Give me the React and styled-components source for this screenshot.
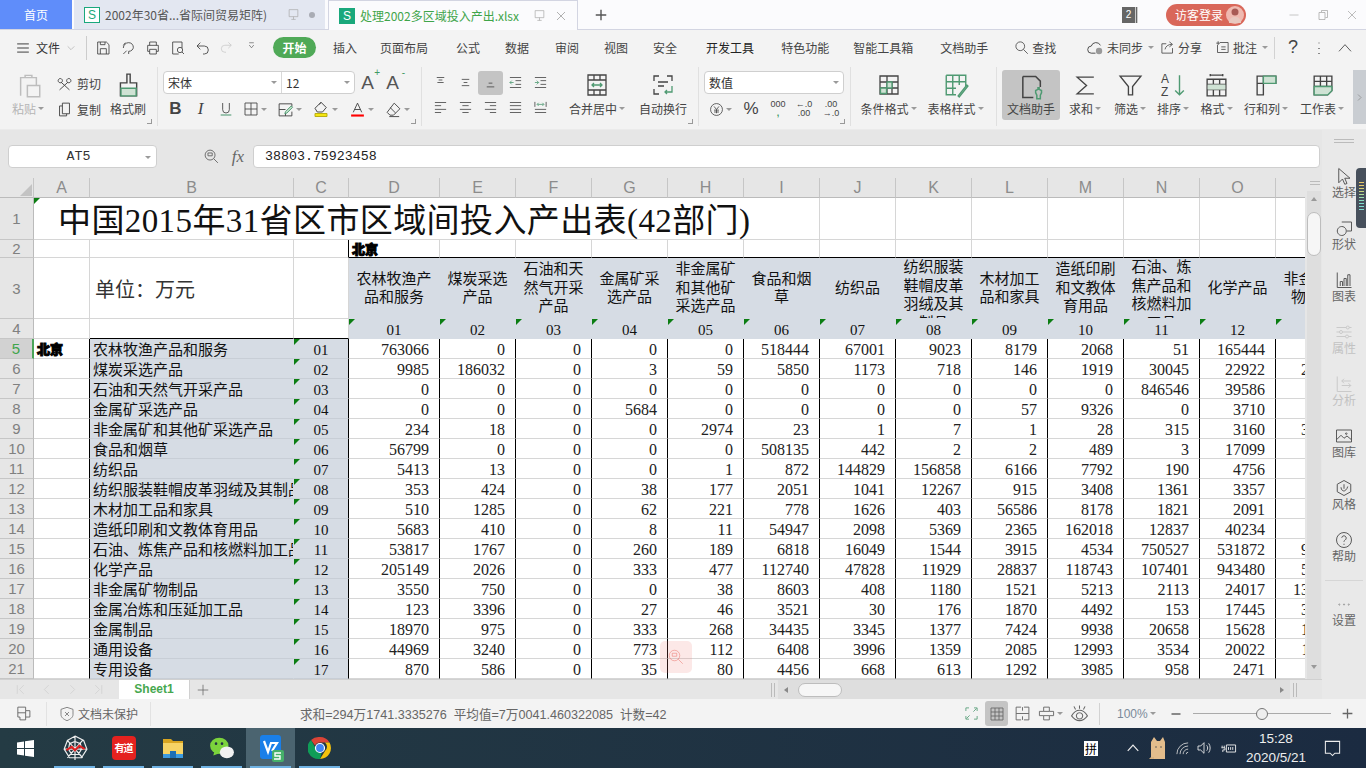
import React from "react";
import styled, { createGlobalStyle } from "styled-components";

const UI = `"Noto Sans CJK SC", "Liberation Sans", sans-serif`;
const SHEET = `"Liberation Serif", "Noto Sans CJK SC", serif`;

const Global = createGlobalStyle`
  html, body { margin: 0; padding: 0; background: #f3f3f3; }
  * { box-sizing: border-box; }
`;

const names = [
  "农林牧渔产品和服务", "煤炭采选产品", "石油和天然气开采产品", "金属矿采选产品", "非金属矿和其他矿采选产品",
  "食品和烟草", "纺织品", "纺织服装鞋帽皮革羽绒及其制品", "木材加工品和家具", "造纸印刷和文教体育用品",
  "石油、炼焦产品和核燃料加工品", "化学产品", "非金属矿物制品", "金属冶炼和压延加工品", "金属制品", "通用设备", "专用设备",
];
const headers = names.slice(0, 13);
const columns = ["D", "E", "F", "G", "H", "I", "J", "K", "L", "M", "N", "O", "P"];
const rows = [
  [763066, 0, 0, 0, 0, 518444, 67001, 9023, 8179, 2068, 51, 165444, 1204],
  [9985, 186032, 0, 3, 59, 5850, 1173, 718, 146, 1919, 30045, 22922, 22810],
  [0, 0, 0, 0, 0, 0, 0, 0, 0, 0, 846546, 39586, 0],
  [0, 0, 0, 5684, 0, 0, 0, 0, 57, 9326, 0, 3710, 0],
  [234, 18, 0, 0, 2974, 23, 1, 7, 1, 28, 315, 3160, 34122],
  [56799, 0, 0, 0, 0, 508135, 442, 2, 2, 489, 3, 17099, 4123],
  [5413, 13, 0, 0, 1, 872, 144829, 156858, 6166, 7792, 190, 4756, 812],
  [353, 424, 0, 38, 177, 2051, 1041, 12267, 915, 3408, 1361, 3357, 2260],
  [510, 1285, 0, 62, 221, 778, 1626, 403, 56586, 8178, 1821, 2091, 1130],
  [5683, 410, 0, 8, 11, 54947, 2098, 5369, 2365, 162018, 12837, 40234, 3340],
  [53817, 1767, 0, 260, 189, 6818, 16049, 1544, 3915, 4534, 750527, 531872, 91523],
  [205149, 2026, 0, 333, 477, 112740, 47828, 11929, 28837, 118743, 107401, 943480, 53412],
  [3550, 750, 0, 0, 38, 8603, 408, 1180, 1521, 5213, 2113, 24017, 130220],
  [123, 3396, 0, 27, 46, 3521, 30, 176, 1870, 4492, 153, 17445, 31204],
  [18970, 975, 0, 333, 268, 34435, 3345, 1377, 7424, 9938, 20658, 15628, 12403],
  [44969, 3240, 0, 773, 112, 6408, 3996, 1359, 2085, 12993, 3534, 20022, 11842],
  [870, 586, 0, 35, 80, 4456, 668, 613, 1292, 3985, 958, 2471, 5321],
];
const pad = (n) => String(n).padStart(2, "0");

// page shell
const Page = styled.div`
  width: 1366px;
  height: 768px;
  overflow: hidden;
  display: flex;
  flex-direction: column;
  font-family: ${UI};
  color: #444;
`;

// title bar with document tabs
const TitleBar = styled.div`
  height: 30px;
  display: flex;
  align-items: stretch;
  background: #fbfbfd;
  border-bottom: 1px solid #d3d5e2;
  flex: none;
`;
const HomeTab = styled.div`
  width: 72px;
  background: #5f8dfa;
  color: #fff;
  font-size: 12px;
  display: flex;
  align-items: center;
  justify-content: center;
`;
const DocTab = styled.div`
  width: ${(p) => p.$w}px;
  margin-left: ${(p) => p.$ml}px;
  display: flex;
  align-items: center;
  padding-left: 10px;
  gap: 5px;
  font-size: 12px;
  white-space: nowrap;
  color: ${(p) => (p.$active ? "#3fa54a" : "#555")};
  background: ${(p) => (p.$active ? "#fbfbfd" : "#e3e7f1")};
  border: ${(p) => (p.$active ? "1px solid #d3d5e2" : "none")};
  border-bottom: none;
  height: ${(p) => (p.$active ? "30px" : "29px")};
`;
const DocLogo = styled.span`
  width: 16px;
  height: 16px;
  flex: none;
  display: flex;
  align-items: center;
  justify-content: center;
  font: 12px "Liberation Sans", sans-serif;
  color: ${(p) => (p.$solid ? "#fff" : "#1aa87c")};
  background: ${(p) => (p.$solid ? "#1aa87c" : "#fff")};
  border: 1px solid #1aa87c;
`;
const TabTail = styled.span`
  margin-left: auto;
  display: flex;
  align-items: center;
  gap: 9px;
  padding-right: 10px;
`;
const TabDot = styled.span`
  width: 6px;
  height: 6px;
  border-radius: 50%;
  background: #a9acb4;
`;
const PlusTab = styled.div`
  width: 46px;
  display: flex;
  align-items: center;
  justify-content: center;
  color: #555;
`;
const TitleRight = styled.div`
  margin-left: auto;
  display: flex;
  align-items: center;
`;
const CountBadge = styled.div`
  width: 16px;
  height: 16px;
  background: #666;
  color: #fff;
  font: 10px "Liberation Sans", sans-serif;
  display: flex;
  align-items: center;
  justify-content: center;
  margin-right: 28px;
  border-right: 3px double #ccc;
`;
const LoginPill = styled.div`
  width: 80px;
  height: 22px;
  border-radius: 11px;
  background: #d9675a;
  color: #fff;
  font-size: 12px;
  display: flex;
  align-items: center;
  padding-left: 9px;
  gap: 3px;
  margin-right: 33px;
`;
const Avatar = styled.span`
  width: 18px;
  height: 18px;
  border-radius: 50%;
  background: #efb9b0;
  display: flex;
  align-items: center;
  justify-content: center;
`;
const WinBtn = styled.div`
  width: 29px;
  display: flex;
  justify-content: center;
  color: #999;
`;

// ribbon tabs
const TabRow = styled.div`
  height: 35px;
  flex: none;
  background: #f3f3f3;
  display: flex;
  align-items: center;
  padding-left: 16px;
  font-size: 12px;
`;
const FileMenu = styled.div`
  width: 71px;
  display: flex;
  align-items: center;
  gap: 6px;
  color: #333;
  border-right: 1px solid #ccc;
  height: 24px;
`;
const Quick = styled.div`
  width: ${(p) => p.$w || 25}px;
  margin-left: ${(p) => p.$ml || 0}px;
  display: flex;
  justify-content: center;
  color: ${(p) => p.$c || "#444"};
`;
const QuickBar = styled.div`
  display: flex;
  margin-left: 3px;
  width: 183px;
`;
const StartPill = styled.div`
  width: 43px;
  height: 21px;
  border-radius: 11px;
  background: #4fa957;
  color: #fff;
  font-weight: 700;
  display: flex;
  align-items: center;
  justify-content: center;
  margin-right: 17px;
`;
const RibbonTab = styled.div`
  margin-right: ${(p) => p.$mr}px;
  color: ${(p) => p.$c || "#444"};
  white-space: nowrap;
`;
const TabTools = styled.div`
  margin-left: auto;
  display: flex;
  align-items: center;
  color: #444;
  padding-right: 3px;
`;
const ToolLink = styled.div`
  display: flex;
  align-items: center;
  gap: 3px;
  margin-right: ${(p) => p.$mr || 0}px;
`;
const HelpMark = styled.span`
  font: 18px "Liberation Sans", sans-serif;
`;
const VSep = styled.span`
  width: 1px;
  height: 22px;
  background: #d2d2d2;
  margin: 0 ${(p) => p.$m || 0}px;
`;

// ribbon body
const Ribbon = styled.div`
  height: 65px;
  flex: none;
  background: #f3f3f3;
  border-bottom: 1px solid #ebebeb;
  display: flex;
  font-size: 12px;
`;
const Group = styled.div`
  position: relative;
  width: ${(p) => p.$w}px;
  padding-left: ${(p) => p.$pl || 0}px;
  margin: 2px 0 3px;
  display: flex;
  border-right: ${(p) => (p.$line === false ? "none" : "1px solid #e0e0e0")};
`;
const Launcher = styled.span`
  position: absolute;
  right: 5px;
  bottom: 2px;
  width: 5px;
  height: 5px;
  border-right: 1px solid #999;
  border-bottom: 1px solid #999;
`;
const Large = styled.div`
  width: ${(p) => p.$w}px;
  margin-left: ${(p) => p.$ml || 0}px;
  height: 50px;
  margin-top: 3px;
  display: flex;
  flex-direction: column;
  align-items: center;
  border-radius: 3px;
  background: ${(p) => (p.$on ? "#c4c4c4" : "transparent")};
  color: ${(p) => (p.$off ? "#b5b5b5" : "#444")};
  padding-top: ${(p) => (p.$on ? 3 : 0)}px;
`;
const LargeIcon = styled.div`
  height: ${(p) => (p.$on ? 27 : 30)}px;
  display: flex;
  align-items: center;
`;
const Label = styled.div`
  display: flex;
  align-items: center;
  white-space: nowrap;
  color: inherit;
`;
const Caret = styled.span`
  width: 0;
  height: 0;
  margin-left: ${(p) => p.$ml ?? 2}px;
  border: 3px solid transparent;
  border-top: 3px solid #9a9a9a;
  border-bottom: none;
`;
const SmallCol = styled.div`
  width: ${(p) => p.$w}px;
  display: flex;
  flex-direction: column;
  gap: 6px;
  padding: 6px 0 0 2px;
`;
const SmallBtn = styled.div`
  display: flex;
  align-items: center;
  gap: 4px;
  height: 20px;
  color: #444;
`;
const Stack = styled.div`
  display: flex;
  flex-direction: column;
`;
const ComboRow = styled.div`
  display: flex;
  align-items: center;
  height: 23px;
  margin-top: 4px;
`;
const Combo = styled.div`
  width: ${(p) => p.$w}px;
  height: 23px;
  background: #fff;
  border: 1px solid #cfcfcf;
  border-radius: 4px;
  display: flex;
  font-size: 12px;
  color: #333;
`;
const ComboPart = styled.div`
  flex: ${(p) => p.$flex};
  display: flex;
  align-items: center;
  justify-content: space-between;
  padding: 0 4px;
  border-right: ${(p) => (p.$line ? "1px solid #d8d8d8" : "none")};
`;
const FontGrow = styled.div`
  width: 25px;
  text-align: center;
  font: 19px "Liberation Sans", sans-serif;
  color: #555;
  position: relative;
`;
const Tiny = styled.sup`
  position: absolute;
  right: 0;
  top: -5px;
  font-size: 10px;
  color: #3f9a62;
`;
const BtnRow = styled.div`
  display: flex;
  align-items: center;
  height: 24px;
  margin-top: 3px;
`;
const ToolBtn = styled.div`
  width: ${(p) => p.$w || 25}px;
  height: ${(p) => (p.$on ? 24 : 20)}px;
  display: flex;
  align-items: center;
  justify-content: center;
  text-align: center;
  border-radius: 3px;
  background: ${(p) => (p.$on ? "#c4c4c4" : "transparent")};
  color: #444;
  font: ${(p) => p.$font || "inherit"};
`;
const Comma = styled.span`
  color: #3f9a62;
  font-weight: 700;
`;
const Numeric = styled.div`
  line-height: 9px;
`;
const AlignGrid = styled.div`
  width: 125px;
  display: grid;
  grid-template-columns: repeat(5, 25px);
  grid-auto-rows: 25px;
  align-items: center;
  justify-items: center;
  padding-top: 3px;
`;
const MoreBar = styled.div`
  width: 13px;
  background: #c9cdd2;
  display: flex;
  align-items: center;
  justify-content: center;
  margin: 5px 0;
  color: #666;
`;

// formula bar
const Workspace = styled.div`
  flex: 1;
  display: flex;
  min-height: 0;
`;
const Book = styled.div`
  width: 1322px;
  display: flex;
  flex-direction: column;
  background: #e6e6e6;
`;
const FormulaBar = styled.div`
  height: 48px;
  flex: none;
  display: flex;
  align-items: center;
  padding: 15px 2px 10px 8px;
`;
const NameBox = styled.div`
  position: relative;
  width: 149px;
  height: 23px;
  background: #fff;
  border: 1px solid #cfcfcf;
  border-radius: 4px;
  font: 13.3px "Liberation Mono", monospace;
  color: #333;
  display: flex;
  align-items: center;
  justify-content: center;
  padding-right: 8px;
`;
const NameCaret = styled(Caret)`
  position: absolute;
  right: 5px;
  top: 10px;
`;
const Fx = styled.span`
  font: italic 17px "Liberation Serif", serif;
  color: #666;
  width: 30px;
  text-align: center;
`;
const FormulaInput = styled.div`
  flex: 1;
  height: 23px;
  background: #fff;
  border: 1px solid #cfcfcf;
  border-radius: 4px;
  font: 13.3px "Liberation Mono", monospace;
  color: #222;
  display: flex;
  align-items: center;
  padding-left: 11px;
`;

// sheet
const SheetRow = styled.div`
  flex: 1;
  display: flex;
  min-height: 0;
  position: relative;
`;
const SheetClip = styled.div`
  width: 1305px;
  overflow: hidden;
  background: #fff;
`;
const Grid = styled.div`
  display: grid;
  width: 1352px;
  grid-template-columns: 34px 56px 204px 55px 91px repeat(12, 76px);
  grid-template-rows: 20px 42px 18px 61px 20px repeat(17, 20px);
`;
const ColHead = styled.div`
  background: #e6e6e6;
  border-right: 1px solid #c6c6c6;
  border-bottom: 1px solid #bbb;
  font: 16px "Liberation Sans", sans-serif;
  color: #8c8c8c;
  display: flex;
  align-items: center;
  justify-content: center;
  position: relative;
`;
const CornerMark = styled.span`
  position: absolute;
  right: 1px;
  bottom: 1px;
  border-left: 12px solid transparent;
  border-bottom: 12px solid #c3c3c3;
`;
const RowHead = styled.div`
  background: ${(p) => (p.$on ? "#d2d2d2" : "#e6e6e6")};
  border-right: ${(p) => (p.$on ? "2px solid #4aa557" : "1px solid #bbb")};
  border-bottom: 1px solid #c6c6c6;
  font: 15px "Liberation Sans", sans-serif;
  color: ${(p) => (p.$on ? "#3fa54a" : "#808080")};
  display: flex;
  align-items: center;
  justify-content: center;
`;
const Cell = styled.div`
  position: relative;
  grid-column: ${(p) => (p.$span ? `span ${p.$span}` : "auto")};
  background: ${(p) => (p.$shade ? "#d6dce4" : "#fff")};
  border-right: 1px solid ${(p) => p.$r || (p.$shade ? "#d6dce4" : "#d6d6d6")};
  border-bottom: 1px solid ${(p) => p.$b || (p.$shade ? "#d6dce4" : "#d6d6d6")};
  font-family: ${SHEET};
  color: #111;
  white-space: nowrap;
  overflow: hidden;
  display: flex;
  align-items: center;
`;
const Title = styled(Cell)`
  font-size: 33px;
  letter-spacing: 0.4px;
  padding: 0 0 2px 24px;
  overflow: visible;
`;
const Unit = styled(Cell)`
  font-size: 20px;
  padding-left: 5px;
  color: #333;
`;
const Bold = styled(Cell)`
  font-family: ${UI};
  font-weight: 900;
  font-size: 13px;
  padding-left: 3px;
  color: #000;
  -webkit-text-stroke: 1px #000;
`;
const Head = styled(Cell)`
  font-size: 15px;
  line-height: 18.5px;
  white-space: normal;
  word-break: break-all;
  text-align: center;
  padding: 0 7px;
  align-items: safe center;
  justify-content: center;
`;
const Code = styled(Cell)`
  font-size: 15px;
  justify-content: center;
  padding-top: 3px;
`;
const NameCell = styled(Cell)`
  font-size: 15px;
  padding-left: 3px;
`;
const Num = styled(Cell)`
  font-size: 16px;
  justify-content: flex-end;
  padding-right: 10px;
  padding-top: 3px;
  color: #222;
`;
const Flag = styled.span`
  position: absolute;
  left: 0;
  top: 0;
  border-top: 6px solid #0b7d12;
  border-right: 6px solid transparent;
`;
const Watermark = styled.div`
  position: absolute;
  left: 660px;
  top: 463px;
  width: 32px;
  height: 32px;
  border-radius: 5px;
  background: rgba(240, 120, 110, 0.17);
  color: rgba(235, 110, 100, 0.5);
  display: flex;
  align-items: center;
  justify-content: center;
`;
const VScroll = styled.div`
  width: 17px;
  background: #e6e6e6;
  padding-left: 2px;
  display: flex;
  flex-direction: column;
  align-items: stretch;
`;
const VTrack = styled.div`
  flex: 1;
  margin-right: 1px;
  margin-top: 6px;
  background: #dedede;
  display: flex;
  flex-direction: column;
  align-items: center;
  padding-top: 6px;
`;
const Grip = styled.div`
  width: ${(p) => p.$w || 10}px;
  height: ${(p) => p.$h || 4}px;
  margin: ${(p) => p.$m || "3px auto 0"};
  flex: none;
  border-top: ${(p) => (p.$v ? "none" : "1px solid #bbb")};
  border-bottom: ${(p) => (p.$v ? "none" : "1px solid #bbb")};
  border-left: ${(p) => (p.$v ? "1px solid #bbb" : "none")};
  border-right: ${(p) => (p.$v ? "1px solid #bbb" : "none")};
`;
const UpArrow = styled.span`
  border: 3px solid transparent;
  border-bottom: 4px solid #999;
  border-top: none;
  margin-bottom: 11px;
`;
const DownArrow = styled.span`
  margin-top: auto;
  margin-bottom: 10px;
  border: 3px solid transparent;
  border-top: 4px solid #999;
  border-bottom: none;
`;
const VThumb = styled.div`
  width: 14px;
  height: 44px;
  border-radius: 7px;
  background: #f6f6f6;
  border: 1px solid #bdbdbd;
`;

// sheet tabs row
const SheetTabs = styled.div`
  height: 20px;
  flex: none;
  display: flex;
  align-items: center;
  background: #e6e6e6;
  border-top: 1px solid #d0d0d0;
`;
const NavArrows = styled.div`
  width: 119px;
  padding-left: 14px;
  display: flex;
  gap: 13px;
  color: #cdcdcd;
`;
const SheetTab = styled.div`
  width: 71px;
  height: 20px;
  background: #fff;
  color: #46a84f;
  font: bold 12px "Liberation Sans", sans-serif;
  display: flex;
  align-items: center;
  justify-content: center;
  border-right: 1px solid #d0d0d0;
  border-bottom: 1px solid #d0d0d0;
`;
const AddSheet = styled.div`
  width: 26px;
  display: flex;
  justify-content: center;
  color: #666;
`;
const HScrollWrap = styled.div`
  margin-left: auto;
  width: 551px;
  display: flex;
  align-items: center;
`;
const HTrack = styled.div`
  width: 512px;
  margin: 0 3px;
  height: 19px;
  background: #dedede;
  display: flex;
  align-items: center;
  padding: 0 6px;
`;
const HThumb = styled.div`
  width: 44px;
  height: 14px;
  margin-left: 10px;
  background: #f6f6f6;
  border: 1px solid #bdbdbd;
  border-radius: 7px;
`;
const LeftArrow = styled.span`
  border: 3px solid transparent;
  border-right: 4px solid #888;
  border-left: none;
`;
const RightArrow = styled.span`
  margin-left: auto;
  border: 3px solid transparent;
  border-left: 4px solid #888;
  border-right: none;
`;

// right side panel
const SidePanel = styled.div`
  width: 44px;
  background: #e9e9e9;
  position: relative;
  display: flex;
  flex-direction: column;
  align-items: center;
  padding-top: 9px;
`;
const SideItem = styled.div`
  height: 52px;
  flex: none;
  display: flex;
  flex-direction: column;
  align-items: center;
  font-size: 12px;
  line-height: 16px;
  color: ${(p) => (p.$off ? "#c2c2c2" : "#666")};
`;
const SideIcon = styled.div`
  height: 16px;
  display: flex;
  align-items: center;
  justify-content: center;
`;
const SideRule = styled.div`
  width: 38px;
  height: 1px;
  flex: none;
  background: #d6d6d6;
  margin: -4px 0 15px;
`;
const Meter = styled.div`
  position: absolute;
  right: 0;
  top: 38px;
  width: 10px;
  height: 60px;
  border-radius: 4px 0 0 4px;
  background: #47505c;
  padding: 14px 2px 8px 3px;
  display: flex;
  flex-direction: column;
  gap: 2px;
`;
const MeterBar = styled.span`
  height: 1px;
  background: ${(p) => p.$c};
`;

// status bar
const StatusBar = styled.div`
  height: 29px;
  flex: none;
  background: #f3f3f3;
  display: flex;
  align-items: center;
  font-size: 12px;
  color: #666;
`;
const StatusCell = styled.div`
  height: 24px;
  width: ${(p) => p.$w}px;
  display: flex;
  align-items: center;
  justify-content: center;
  gap: 3px;
  border-right: 1px solid #e2e2e2;
`;
const Stats = styled.div`
  margin-left: 149px;
  width: 658px;
  font: 12.6px "Liberation Sans", "Noto Sans CJK SC", sans-serif;
  color: #666;
  white-space: nowrap;
`;
const ViewBtn = styled.div`
  width: ${(p) => p.$w || 25}px;
  height: 25px;
  border-radius: 3px;
  display: flex;
  align-items: center;
  justify-content: center;
  background: ${(p) => (p.$on ? "#c4c4c4" : "transparent")};
`;
const Zoom = styled.div`
  margin-left: 12px;
  width: 53px;
  display: flex;
  align-items: center;
  font: 12px "Liberation Sans", sans-serif;
  color: #7a8a9a;
`;
const Slider = styled.div`
  width: 138px;
  height: 1px;
  background: #aaa;
  margin: 0 10px 0 11px;
  display: flex;
  align-items: center;
  padding-left: 63px;
`;
const Knob = styled.span`
  width: 12px;
  height: 12px;
  flex: none;
  border-radius: 50%;
  background: #eee;
  border: 1px solid #777;
`;

// windows taskbar
const Taskbar = styled.div`
  height: 40px;
  flex: none;
  display: flex;
  align-items: center;
  background: linear-gradient(90deg, #243b44, #1b2b41);
  color: #fff;
`;
const StartBtn = styled.div`
  width: 50px;
  display: flex;
  justify-content: center;
`;
const TaskApp = styled.div`
  width: ${(p) => p.$w || 49}px;
  height: 40px;
  display: flex;
  align-items: center;
  justify-content: center;
  position: relative;
  background: ${(p) => (p.$on ? "#4b6470" : "transparent")};
  &::after {
    content: "";
    position: absolute;
    left: 4px;
    right: 4px;
    bottom: 0;
    height: 2px;
    background: #6fb2e3;
  }
`;
const Tray = styled.div`
  margin-left: auto;
  display: flex;
  align-items: center;
`;
const ImeBox = styled.div`
  width: 14px;
  height: 15px;
  background: #fff;
  color: #000;
  font-size: 12px;
  line-height: 15px;
  text-align: center;
  margin-right: 23px;
`;
const TrayIcon = styled.div`
  width: ${(p) => p.$w}px;
  display: flex;
  justify-content: center;
`;
const Clock = styled.div`
  width: 62px;
  margin-left: 4px;
  text-align: center;
  font: 13.5px/19px "Liberation Sans", sans-serif;
  color: #eee;
`;
const Notify = styled.div`
  width: 51px;
  margin-right: 8px;
  display: flex;
  justify-content: center;
`;

const SvgBase = styled.svg`
  display: block;
  flex: none;
  fill: none;
  stroke: ${(p) => p.$c || "currentColor"};
  stroke-width: ${(p) => p.$sw || 1.3};
`;
const Ico = ({ s = 18, c, sw, children }) => (
  <SvgBase width={s} height={s} viewBox="0 0 24 24" $c={c} $sw={sw}>
    {children}
  </SvgBase>
);

const G = "#4f9a72";
const icons = {
  menu: <path d="M2 5h20M2 12h20M2 19h20" />,
  chev: <path d="M4 8l8 8 8-8" />,
  save: <path d="M4 3h13l4 4v14H4zM8 21v-8h9v8M8 3v4h7V3" />,
  share2: <path d="M5 12a8 8 0 0 1 8-8c5 0 7 4 7 7s-3 6-7 6v4M5 21l5-5M8 4l-3 4" />,
  print: <path d="M7 8V3h10v5M4 8h16v9h-3M7 17H4V8M7 14h10v7H7z" />,
  preview: <path d="M4 3h14v9M4 3v18h9M15 15m-4 0a4 4 0 1 0 8 0 4 4 0 1 0-8 0M18 18l3 3" />,
  undo: <path d="M8 4L3 9l5 5M3 9h11a6 6 0 0 1 0 12h-2" />,
  redo: <path d="M16 4l5 5-5 5M21 9H10a6 6 0 0 0 0 12h2" />,
  ddown: <path d="M7 6h10M7 11l5 6 5-6" />,
  search: <path d="M10 3a7 7 0 1 0 0 14 7 7 0 0 0 0-14zM15 15l7 7" />,
  share: <path d="M20 13v8H3V6h7M8 15c1-5 5-8 11-8M15 3l5 4-5 4" />,
  note: <path d="M8 4h13v16H4V8M2 5h6M5 2v6M10 11h7M10 15h7" />,
  cloud: (
    <>
      <path d="M12 20H6a5 5 0 0 1 0-10 7 7 0 0 1 13-1" />
      <circle cx="17" cy="17" r="4.5" fill="#999" stroke="none" />
    </>
  ),
  kebab: <path d="M12 4v1M12 12v1M12 20v1" />,
  up: <path d="M3 17l9-10 9 10" />,
  paste: <path d="M5 21V5h4V3h6v2h4v7M9 5h6M11 12h11v10H11z" />,
  scissors: <path d="M6 5a3 3 0 1 0 .1 0zM18 5a3 3 0 1 0 .1 0zM7 10l12 11M17 10L5 21" />,
  copy: <path d="M9 3h10v15H9zM9 7H5v14h10v-3" />,
  brush: (
    <>
      <path d="M11 2h3v8h6v12H5V10h6z" />
      <path d="M5.5 15h14v7h-14z" fill="#cfe2d4" stroke={G} />
    </>
  ),
  underline: (
    <>
      <path d="M7 3v10a5 5 0 0 0 10 0V3" />
      <path d="M4 21h16" stroke={G} strokeWidth="1.6" />
    </>
  ),
  borders: <path d="M3 3h18v18H3zM12 3v18M3 12h18" />,
  cond: (
    <>
      <path d="M3 4h18v4M3 4v17h18v-6M3 12h9M12 16v5" />
      <path d="M12 15l8-8 2 2-8 8-3 1z" stroke={G} fill="#bfe0c8" />
    </>
  ),
  fill: (
    <>
      <path d="M12 3l7 7-5 6H7l-3-5zM12 3l-2 3" />
      <path d="M4 18h16v4H4z" fill="#f5e611" stroke="#b8ad10" />
    </>
  ),
  color: (
    <>
      <path d="M6 16L12 3l6 13M8 12h8" />
      <path d="M3 19h18v3H3z" fill="#f00" stroke="none" />
    </>
  ),
  eraser: <path d="M13 3l8 8-9 9H7l-4-4zM7 9l8 8M6 22h14" />,
  alignTop: <path d="M6 4h12M9 8h6M7 12h10" />,
  alignMid: <path d="M6 7h12M9 12h6M6 17h12" />,
  alignBot: <path d="M9 13h6M6 19h12" />,
  indentL: (
    <>
      <path d="M3 4h18M12 9h9M12 15h9M3 20h18" />
      <path d="M9 12H3M6 9l-3 3 3 3" stroke={G} />
    </>
  ),
  indentR: (
    <>
      <path d="M3 4h18M12 9h9M12 15h9M3 20h18" />
      <path d="M3 12h6M6 9l3 3-3 3" stroke={G} />
    </>
  ),
  left: <path d="M3 4h18M3 9h10M3 15h18M3 20h10" />,
  center: <path d="M3 4h18M7 9h10M3 15h18M7 20h10" />,
  right: <path d="M3 4h18M11 9h10M3 15h18M11 20h10" />,
  justify: <path d="M3 4h18M3 9h18M3 15h18M3 20h18" />,
  distribute: (
    <>
      <path d="M3 20h18M3 15h18M3 3v8M21 3v8" />
      <path d="M7 7h10M9 4.5L6.5 7 9 9.5M15 4.5L17.5 7 15 9.5" stroke={G} />
    </>
  ),
  merge: (
    <>
      <path d="M3 2h18v20H3zM3 7h18M3 17h18M9 2v5M15 2v5M9 17v5M15 17v5" />
      <path d="M7 12h10M9 10l-2 2 2 2M15 10l2 2-2 2" stroke={G} />
    </>
  ),
  wrap: (
    <>
      <path d="M8 3H3v5M16 3h5v5M3 16v5h5M7 9h10M7 13h6" />
      <path d="M21 13v6h-7M16 17l-2 2 2 2" stroke={G} />
    </>
  ),
  yen: (
    <>
      <circle cx="12" cy="12" r="9.5" />
      <path d="M8 7l4 5 4-5M12 12v6M8 13h8M8 16h8" />
    </>
  ),
  condFmt: (
    <>
      <path d="M3 3h18v18H3zM3 9h18M3 15h18M10 3v18M15 9v12" />
      <path d="M3.5 15h6v5.5h-6zM10 9h5v6h-5z" fill="#cfe2d4" stroke={G} />
    </>
  ),
  tableFmt: (
    <>
      <path d="M3 3h18v10M3 3v18h9M3 9h18M3 15h9M9 3v18M15 3v9" stroke={G} />
      <path d="M14 22l8-10 1 1-8 10z" stroke={G} fill="#cfe2d4" />
    </>
  ),
  docHelp: (
    <>
      <path d="M5 3h11l4 4v5M5 3v18h9" />
      <path d="M18 12v2l-2 1v2l1 2v3h3v-3l1-2v-2l-2-1v-2" stroke={G} />
    </>
  ),
  sigma: <path d="M20 4H4l9 8-9 8h16" />,
  filter: <path d="M2 3h20l-8 10v8h-4v-8z" />,
  sort: (
    <>
      <path d="M18 3v18M14 17l4 4 4-4" stroke={G} />
    </>
  ),
  cellFmt: (
    <>
      <path d="M3 6h18v16H3zM3 11h18M3 16h18M9 6v16M15 6v16M6 2h12M6 1v2M18 1v2" />
      <path d="M3.5 11h17v5h-17z" fill="#cfe2d4" stroke="none" />
    </>
  ),
  rowCol: (
    <>
      <path d="M3 3h18v7H3zM3 10h6v11H3zM9 3v7M15 3v7" />
      <path d="M9 3h12v7H9z" fill="#cfe2d4" stroke={G} />
    </>
  ),
  sheetFmt: (
    <>
      <path d="M4 3h17v14l-4 4H4zM4 8h17M4 13h17M10 3v10M16 3v10" />
      <path d="M4 13h17v4l-4 4H4z" fill="#cfe2d4" stroke={G} />
    </>
  ),
  cursor: <path d="M5 2v19l5-5 3 7 3-1-3-7h7z" />,
  shape: <path d="M9 10a6 6 0 1 0 .1 0M9 4h13v12h-6" />,
  chart: <path d="M3 2v20h19M7 20v-6h3v6M12 20v-10h3v10M17 20V5h3v15" />,
  prop: <path d="M2 6h13M19 6h3M2 12h4M10 12h12M2 18h12M18 18h4M15 6a2 2 0 1 0 4 0 2 2 0 0 0-4 0M6 12a2 2 0 1 0 4 0 2 2 0 0 0-4 0M14 18a2 2 0 1 0 4 0 2 2 0 0 0-4 0" />,
  analyze: <path d="M3 2v20h19M9 8h12M9 8l3-3M9 8l3 3M21 14H9M21 14l-3 3M21 14l-3-3" />,
  gallery: <path d="M2 4h20v16H2zM2 17l6-6 4 4 4-3 6 5M15 8a1 1 0 1 0 .1 0" />,
  style: <path d="M12 2l9 5v10l-9 5-9-5V7zM12 7v6M8 11c0 4 3 5 4 5s4-2 5-6" />,
  help: (
    <>
      <circle cx="12" cy="12" r="10" />
      <path d="M9 9a3 3 0 1 1 4.5 3c-1 .7-1.5 1-1.5 2.500M12 17v1.500" />
    </>
  ),
  dots: <path d="M4 12a1 1 0 1 0 .1 0M12 12a1 1 0 1 0 .1 0M20 12a1 1 0 1 0 .1 0" />,
  protect: <path d="M4 3h11v5h6v9h-6v4H7v-4H4zM4 11h11M15 8v9" />,
  shield: <path d="M12 2l9 3v8c0 4-4 7-9 9-5-2-9-5-9-9V5zM9 9l6 6M15 9l-6 6" />,
  expand: <path d="M3 8V3h5M16 3h5v5M3 16v5h5M21 16v5h-5M9 15L4 20M15 9l5-5" />,
  gridView: <path d="M3 3h18v18H3zM3 9h18M3 15h18M9 3v18M15 3v18" />,
  pageView: <path d="M10 3H3v18h7M14 3h7v18h-7M3 12h18M12 3v5M12 16v5" />,
  splitView: <path d="M8 3h8v6h6v6h-6v6H8v-6H2V9h6zM8 9h8M8 15h8" />,
  eye: <path d="M5 3l2 4M19 3l-2 4M12 2v4M2 15c3-5 7-7 10-7s7 2 10 7c-3 4-7 6-10 6s-7-2-10-6zM12 11a4 4 0 1 0 .1 0" />,
  zoomTool: <path d="M10 3a7 7 0 1 0 0 14 7 7 0 0 0 0-14zM15 15l6 6M7 7h6v4H7z" />,
  plus: <path d="M12 3v18M3 12h18" />,
  minus: <path d="M3 12h18" />,
  monitor: <path d="M4 3h16v13H4zM12 16v5M8 21h8" />,
  close: <path d="M4 4l16 16M20 4L4 20" />,
  restore: <path d="M9 6V3h12v14h-4M4 7h12v14H4z" />,
  first: <path d="M6 4v16M18 4l-8 8 8 8" />,
  prev: <path d="M16 4l-8 8 8 8" />,
  next: <path d="M8 4l8 8-8 8" />,
  last: <path d="M18 4v16M6 4l8 8-8 8" />,
  wifi: <path d="M3 21a18 18 0 0 1 18-18M8 21A13 13 0 0 1 21 8M13 21a8 8 0 0 1 8-8M18 21a3 3 0 0 1 3-3" />,
  volume: <path d="M3 9v6h4l5 5V4L7 9zM16 8c2 2 2 6 0 8M19 5c3 4 3 10 0 14" />,
  battery: <path d="M9 7h13v10H9zM12 10v4M15 10v4M18 10v4M3 8v3M6 8v3M2 11h5v3H4v3" />,
  bubble: <path d="M3 3h18v15h-6l-3 3-3-3H3z" />,
};
const Glyph = ({ n, s, c, sw }) => (
  <Ico s={s} c={c} sw={sw}>
    {icons[n]}
  </Ico>
);

const LargeBtn = ({ w, ml, icon, label, caret = true, on, off }) => (
  <Large $w={w} $ml={ml} $on={on} $off={off}>
    <LargeIcon $on={on}>{icon}</LargeIcon>
    <Label>
      {label}
      {caret && <Caret />}
    </Label>
  </Large>
);

const SortIcon = () => (
  <SvgBase width={26} height={26} viewBox="0 0 24 24">
    <text x="1" y="10" fontSize="11" fontFamily="Liberation Sans" fill="#444" stroke="none">A</text>
    <text x="1" y="22" fontSize="11" fontFamily="Liberation Sans" fill="#444" stroke="none">Z</text>
    {icons.sort}
  </SvgBase>
);

const SpiderIcon = () => (
  <svg width="26" height="26" viewBox="0 0 24 24" fill="none" stroke="#eee" strokeWidth="1.1">
    <path d="M12 1l8 4 3 8-5 8H7l-5-8 3-8zM12 1v22M2 13h20M5 5l14 16M19 5L5 21M12 6l5 2 1 5-3 5H9l-3-5 1-5z" />
    <path d="M4 14l5-3 3 3 4-4 5 3" stroke="#e02020" strokeWidth="2" />
  </svg>
);
const YoudaoIcon = styled.div`
  width: 24px;
  height: 24px;
  border-radius: 4px;
  background: #e5221f;
  color: #fff;
  font-size: 10px;
  font-weight: 700;
  line-height: 24px;
  text-align: center;
  white-space: nowrap;
  letter-spacing: -1px;
`;
const FolderIcon = () => (
  <svg width="24" height="24" viewBox="0 0 24 24">
    <path d="M2 3h8l2 2h10v3H2z" fill="#d9a520" />
    <path d="M2 7h20v15H2z" fill="#f6d365" />
    <path d="M2 18h20v4H2z" fill="#3c9ae0" />
    <path d="M9 15h6v7H9z" fill="#1e6fb5" />
  </svg>
);
const WechatIcon = () => (
  <svg width="26" height="26" viewBox="0 0 24 24">
    <ellipse cx="9.500" cy="10" rx="8.500" ry="7.500" fill="#7bd33c" />
    <path d="M5 15l-1 4 5-2z" fill="#7bd33c" />
    <ellipse cx="16.500" cy="16" rx="6.500" ry="5.500" fill="#f1f1f1" />
    <circle cx="6.500" cy="8" r="1.200" fill="#234" />
    <circle cx="12" cy="8" r="1.200" fill="#234" />
  </svg>
);
const WpsIcon = () => (
  <svg width="28" height="30" viewBox="0 0 28 30">
    <rect x="3" y="2" width="21" height="24" rx="3" fill="#1a7fe8" />
    <path d="M7 8l4 11 3-9h6l-5 8" fill="none" stroke="#fff" strokeWidth="2.200" />
    <rect x="15" y="17" width="12" height="12" rx="2" fill="#46b06a" />
    <path d="M24 20h-6v3h5v3h-6" fill="none" stroke="#fff" strokeWidth="1.400" />
  </svg>
);
const ChromeIcon = () => (
  <svg width="24" height="24" viewBox="0 0 24 24">
    <path d="M12 1a11 11 0 0 1 9.500 5.500H12a5.500 5.500 0 0 0-5 3L3 4a11 11 0 0 1 9-3z" fill="#db4437" />
    <path d="M21.500 6.500A11 11 0 0 1 12 23l5-8a5.500 5.500 0 0 0 0-8.500z" fill="#f4c20d" />
    <path d="M3 4l4.500 8a5.500 5.500 0 0 0 6 5L12 23A11 11 0 0 1 3 4z" fill="#0f9d58" />
    <circle cx="12" cy="12" r="4.500" fill="#4285f4" stroke="#fff" strokeWidth="1.200" />
  </svg>
);
const CatIcon = () => (
  <svg width="20" height="24" viewBox="0 0 20 24">
    <path d="M3 23V6l3-5 3 4h3l3-4 2 5v17z" fill="#e3bd8c" />
    <path d="M1 23h5v-2H3z" fill="#d9b27f" />
    <circle cx="8" cy="11" r="0.800" fill="#555" />
    <circle cx="13" cy="11" r="0.800" fill="#555" />
  </svg>
);

const meter = ["#e8c86a", "#e8c86a", "#d8d070", "#c8d880", "#b0dc9a", "#9adcb0", "#8adcc0", "#80dcd0", "#80dcd0", "#80dcd0"];
const sideItems = [
  ["cursor", "选择"], ["shape", "形状"], ["chart", "图表"], ["prop", "属性", true], ["analyze", "分析", true],
  ["gallery", "图库"], ["style", "风格"], ["help", "帮助"],
];

export default function App() {
  return (
    <Page>
      <Global />
      <TitleBar>
        <HomeTab>首页</HomeTab>
        <DocTab $w={251} $ml={2}>
          <DocLogo>S</DocLogo>
          2002年30省...省际间贸易矩阵)
          <TabTail>
            <Glyph n="monitor" s={13} c="#aaa" />
            <TabDot />
          </TabTail>
        </DocTab>
        <DocTab $w={250} $ml={3} $active>
          <DocLogo $solid>S</DocLogo>
          处理2002多区域投入产出.xlsx
          <TabTail>
            <Glyph n="monitor" s={13} c="#aaa" />
            <Glyph n="close" s={12} c="#888" />
          </TabTail>
        </DocTab>
        <PlusTab>
          <Glyph n="plus" s={14} sw={2.4} />
        </PlusTab>
        <TitleRight>
          <CountBadge>2</CountBadge>
          <LoginPill>
            访客登录
            <Avatar>
              <svg width="14" height="16" viewBox="0 0 14 16">
                <circle cx="7" cy="5" r="3.500" fill="#a85a55" />
                <path d="M1 16c0-5 3-6 6-6s6 1 6 6z" fill="#e8c8c0" />
              </svg>
            </Avatar>
          </LoginPill>
          <WinBtn>
            <Glyph n="minus" s={12} c="#aaa" />
          </WinBtn>
          <WinBtn>
            <Glyph n="restore" s={12} c="#999" />
          </WinBtn>
          <WinBtn>
            <Glyph n="close" s={12} c="#999" />
          </WinBtn>
        </TitleRight>
      </TitleBar>

      <TabRow>
        <FileMenu>
          <Glyph n="menu" s={14} sw={1.6} />
          文件
          <Glyph n="chev" s={10} c="#999" />
        </FileMenu>
        <QuickBar>
          {["save", "share2", "print", "preview", "undo"].map((n) => (
            <Quick key={n}>
              <Glyph n={n} s={16} />
            </Quick>
          ))}
          <Quick $w={22} $c="#c8c8c8">
            <Glyph n="redo" s={14} />
          </Quick>
          <Quick $w={28}>
            <Glyph n="ddown" s={11} />
          </Quick>
        </QuickBar>
        <StartPill>开始</StartPill>
        {[
          ["插入", 23], ["页面布局", 28], ["公式", 25], ["数据", 26], ["审阅", 25], ["视图", 25],
          ["安全", 29], ["开发工具", 27], ["特色功能", 24], ["智能工具箱", 27], ["文档助手", 26],
        ].map(([t, mr]) => (
          <RibbonTab key={t} $mr={mr} $c={t === "开发工具" ? "#222" : undefined}>
            {t}
          </RibbonTab>
        ))}
        <ToolLink>
          <Glyph n="search" s={15} />
          查找
        </ToolLink>
        <TabTools>
          <ToolLink $mr={6}>
            <Glyph n="cloud" s={17} />
            未同步
            <Caret />
          </ToolLink>
          <ToolLink $mr={13}>
            <Glyph n="share" s={15} />
            分享
          </ToolLink>
          <ToolLink $mr={6}>
            <Glyph n="note" s={15} />
            批注
            <Caret />
          </ToolLink>
          <VSep />
          <Quick $w={36}>
            <HelpMark>?</HelpMark>
          </Quick>
          <Quick $w={16}>
            <Glyph n="kebab" s={16} sw={2.4} />
          </Quick>
          <Quick $w={36}>
            <Glyph n="up" s={16} />
          </Quick>
        </TabTools>
      </TabRow>

      <Ribbon>
        <Group $w={158}>
          <LargeBtn w={52} ml={2} label="粘贴" off icon={<Glyph n="paste" s={27} c="#bdbdbd" />} />
          <SmallCol $w={54}>
            <SmallBtn>
              <Glyph n="scissors" s={17} />
              剪切
            </SmallBtn>
            <SmallBtn>
              <Glyph n="copy" s={17} />
              复制
            </SmallBtn>
          </SmallCol>
          <LargeBtn w={40} label="格式刷" caret={false} icon={<Glyph n="brush" s={26} />} />
          <Launcher />
        </Group>
        <Group $w={264} $pl={5}>
          <Stack>
            <ComboRow>
              <Combo $w={192}>
                <ComboPart $flex={121} $line>
                  宋体
                  <Caret />
                </ComboPart>
                <ComboPart $flex={71}>
                  12
                  <Caret />
                </ComboPart>
              </Combo>
              <FontGrow>
                A<Tiny>+</Tiny>
              </FontGrow>
              <FontGrow>
                A<Tiny>-</Tiny>
              </FontGrow>
            </ComboRow>
            <BtnRow>
              <ToolBtn $font="bold 17px 'Liberation Sans', sans-serif">B</ToolBtn>
              <ToolBtn $font="italic 17px 'Liberation Serif', serif">I</ToolBtn>
              <ToolBtn>
                <Glyph n="underline" s={16} />
              </ToolBtn>
              <ToolBtn $w={34}>
                <Glyph n="borders" s={16} />
                <Caret />
              </ToolBtn>
              <ToolBtn $w={34}>
                <Glyph n="cond" s={17} />
                <Caret />
              </ToolBtn>
              <ToolBtn $w={38}>
                <Glyph n="fill" s={18} />
                <Caret />
              </ToolBtn>
              <ToolBtn $w={34}>
                <Glyph n="color" s={17} />
                <Caret />
              </ToolBtn>
              <ToolBtn $w={38}>
                <Glyph n="eraser" s={17} />
                <Caret />
              </ToolBtn>
            </BtnRow>
          </Stack>
          <Launcher />
        </Group>
        <Group $w={277} $pl={6}>
          <AlignGrid>
            <Glyph n="alignTop" s={15} />
            <Glyph n="alignMid" s={15} />
            <ToolBtn $on>
              <Glyph n="alignBot" s={15} />
            </ToolBtn>
            <Glyph n="indentL" s={15} />
            <Glyph n="indentR" s={15} />
            <Glyph n="left" s={15} />
            <Glyph n="center" s={15} />
            <Glyph n="right" s={15} />
            <Glyph n="justify" s={15} />
            <Glyph n="distribute" s={15} />
          </AlignGrid>
          <LargeBtn w={66} ml={11} label="合并居中" icon={<Glyph n="merge" s={24} />} />
          <LargeBtn w={66} label="自动换行" caret={false} icon={<Glyph n="wrap" s={24} />} />
          <Launcher />
        </Group>
        <Group $w={152} $pl={5}>
          <Stack>
            <ComboRow>
              <Combo $w={140}>
                <ComboPart $flex={1}>
                  数值
                  <Caret />
                </ComboPart>
              </Combo>
            </ComboRow>
            <BtnRow>
              <ToolBtn $w={32}>
                <Glyph n="yen" s={15} />
                <Caret />
              </ToolBtn>
              <ToolBtn $w={30} $font="17px 'Liberation Sans', sans-serif">%</ToolBtn>
              <ToolBtn $w={24} $font="9px 'Liberation Sans', sans-serif">
                <Numeric>
                  000
                  <br />
                  <Comma>,</Comma>
                </Numeric>
              </ToolBtn>
              <ToolBtn $w={28} $font="9px 'Liberation Sans', sans-serif">
                <Numeric>
                  ←.0
                  <br />
                  .00
                </Numeric>
              </ToolBtn>
              <ToolBtn $w={26} $font="9px 'Liberation Sans', sans-serif">
                <Numeric>
                  .00
                  <br />
                  →.0
                </Numeric>
              </ToolBtn>
            </BtnRow>
          </Stack>
          <Launcher />
        </Group>
        <Group $w={146} $pl={4}>
          <LargeBtn w={67} label="条件格式" icon={<Glyph n="condFmt" s={24} />} />
          <LargeBtn w={67} label="表格样式" icon={<Glyph n="tableFmt" s={26} />} />
        </Group>
        <Group $w={356} $pl={5} $line={false}>
          <LargeBtn w={58} on label="文档助手" caret={false} icon={<Glyph n="docHelp" s={28} />} />
          <LargeBtn w={46} ml={2} label="求和" icon={<Glyph n="sigma" s={25} />} />
          <LargeBtn w={44} label="筛选" icon={<Glyph n="filter" s={25} />} />
          <LargeBtn w={42} label="排序" icon={<SortIcon />} />
          <LargeBtn w={45} label="格式" icon={<Glyph n="cellFmt" s={25} />} />
          <LargeBtn w={54} label="行和列" icon={<Glyph n="rowCol" s={25} />} />
          <LargeBtn w={58} label="工作表" icon={<Glyph n="sheetFmt" s={25} />} />
        </Group>
        <MoreBar>
          <Glyph n="next" s={9} />
        </MoreBar>
      </Ribbon>

      <Workspace>
        <Book>
          <FormulaBar>
            <NameBox>
              AT5
              <NameCaret />
            </NameBox>
            <Quick $w={24} $ml={42} $c="#666">
              <Glyph n="zoomTool" s={17} />
            </Quick>
            <Fx>fx</Fx>
            <FormulaInput>38803.75923458</FormulaInput>
          </FormulaBar>
          <SheetRow>
            <SheetClip>
              <Grid>
                <ColHead>
                  <CornerMark />
                </ColHead>
                {["A", "B", "C", ...columns].map((c) => (
                  <ColHead key={c}>{c}</ColHead>
                ))}

                <RowHead>1</RowHead>
                <Title $span={9}>
                  <Flag />
                  中国2015年31省区市区域间投入产出表(42部门)
                </Title>
                {columns.slice(6).map((c) => (
                  <Cell key={c} />
                ))}

                <RowHead>2</RowHead>
                <Cell />
                <Cell />
                <Cell $r="#000" />
                <Bold $b="#000">北京</Bold>
                {columns.slice(1).map((c) => (
                  <Cell key={c} $b="#000" />
                ))}

                <RowHead>3</RowHead>
                <Cell />
                <Unit>单位：万元</Unit>
                <Cell />
                {headers.map((h) => (
                  <Head key={h} $shade>
                    {h}
                  </Head>
                ))}

                <RowHead>4</RowHead>
                <Cell />
                <Cell $b="#000" />
                <Cell $b="#000" />
                {headers.map((h, i) => (
                  <Code key={h} $shade>
                    <Flag />
                    {pad(i + 1)}
                  </Code>
                ))}

                {rows.map((row, r) => (
                  <React.Fragment key={r}>
                    <RowHead $on={r === 0}>{r + 5}</RowHead>
                    {r === 0 ? <Bold $r="#000">北京</Bold> : <Cell $r="#000" />}
                    <NameCell $shade $r="#d6dce4" $b="#c8ced6">
                      {names[r]}
                    </NameCell>
                    <Code $shade $r="#000" $b="#c8ced6">
                      <Flag />
                      {pad(r + 1)}
                    </Code>
                    {row.map((v, c) => (
                      <Num key={c} $r="#000">
                        {v}
                      </Num>
                    ))}
                  </React.Fragment>
                ))}
              </Grid>
            </SheetClip>
            <Watermark>
              <Glyph n="zoomTool" s={18} />
            </Watermark>
            <VScroll>
              <Grip />
              <VTrack>
                <UpArrow />
                <VThumb />
                <DownArrow />
              </VTrack>
            </VScroll>
          </SheetRow>
          <SheetTabs>
            <NavArrows>
              <Glyph n="first" s={13} />
              <Glyph n="prev" s={13} />
              <Glyph n="next" s={13} />
              <Glyph n="last" s={13} />
            </NavArrows>
            <SheetTab>Sheet1</SheetTab>
            <AddSheet>
              <Glyph n="plus" s={14} />
            </AddSheet>
            <HScrollWrap>
              <Grip $v $w={4} $h={14} $m="0" />
              <HTrack>
                <LeftArrow />
                <HThumb />
                <RightArrow />
              </HTrack>
              <Grip $v $w={4} $h={14} $m="0" />
            </HScrollWrap>
          </SheetTabs>
        </Book>
        <SidePanel>
          <Grip $w={20} $m="0 0 25px" />
          <Meter>
            {meter.map((c, i) => (
              <MeterBar key={i} $c={c} />
            ))}
          </Meter>
          {sideItems.map(([n, t, off]) => (
            <SideItem key={n} $off={off}>
              <SideIcon>
                <Glyph n={n} s={18} c={off ? "#c8c8c8" : "#555"} />
              </SideIcon>
              {t}
            </SideItem>
          ))}
          <SideRule />
          <SideItem>
            <SideIcon>
              <Glyph n="dots" s={14} c="#888" />
            </SideIcon>
            设置
          </SideItem>
        </SidePanel>
      </Workspace>

      <StatusBar>
        <StatusCell $w={47}>
          <Glyph n="protect" s={17} />
        </StatusCell>
        <StatusCell $w={104}>
          <Glyph n="shield" s={16} c="#777" />
          文档未保护
        </StatusCell>
        <Stats>求和=294万1741.3335276&nbsp;&nbsp;平均值=7万0041.460322085&nbsp;&nbsp;计数=42</Stats>
        <ViewBtn $w={27}>
          <Glyph n="expand" s={15} c={G} />
        </ViewBtn>
        <ViewBtn $on $w={23}>
          <Glyph n="gridView" s={16} />
        </ViewBtn>
        <ViewBtn $w={29}>
          <Glyph n="pageView" s={17} />
        </ViewBtn>
        <ViewBtn $w={27}>
          <Glyph n="splitView" s={17} />
          <Caret />
        </ViewBtn>
        <ViewBtn $w={30}>
          <Glyph n="eye" s={19} />
        </ViewBtn>
        <VSep $m={5} />
        <Zoom>
          100%
          <Caret />
        </Zoom>
        <Glyph n="minus" s={12} sw={3} />
        <Slider>
          <Knob />
        </Slider>
        <Glyph n="plus" s={13} sw={2.4} />
      </StatusBar>

      <Taskbar>
        <StartBtn>
          <svg width="17" height="17" viewBox="0 0 17 17" fill="#fff">
            <path d="M0 2.500l7-1v6.500H0zM8 1.300l9-1.300v8H8zM0 9h7v6.500l-7-1zM8 9h9v8l-9-1.300z" />
          </svg>
        </StartBtn>
        <TaskApp>
          <SpiderIcon />
        </TaskApp>
        <TaskApp>
          <YoudaoIcon>有道</YoudaoIcon>
        </TaskApp>
        <TaskApp>
          <FolderIcon />
        </TaskApp>
        <TaskApp>
          <WechatIcon />
        </TaskApp>
        <TaskApp $on $w={49}>
          <WpsIcon />
        </TaskApp>
        <TaskApp $w={49}>
          <ChromeIcon />
        </TaskApp>
        <Tray>
          <ImeBox>拼</ImeBox>
          <TrayIcon $w={24}>
            <Glyph n="up" s={14} c="#eee" sw={2} />
          </TrayIcon>
          <TrayIcon $w={26}>
            <CatIcon />
          </TrayIcon>
          <TrayIcon $w={22}>
            <Glyph n="wifi" s={15} c="#ddd" />
          </TrayIcon>
          <TrayIcon $w={22}>
            <Glyph n="volume" s={16} c="#eee" />
          </TrayIcon>
          <TrayIcon $w={26}>
            <Glyph n="battery" s={17} c="#eee" />
          </TrayIcon>
          <Clock>
            15:28
            <br />
            2020/5/21
          </Clock>
          <Notify>
            <Glyph n="bubble" s={19} c="#eee" />
          </Notify>
        </Tray>
      </Taskbar>
    </Page>
  );
}
